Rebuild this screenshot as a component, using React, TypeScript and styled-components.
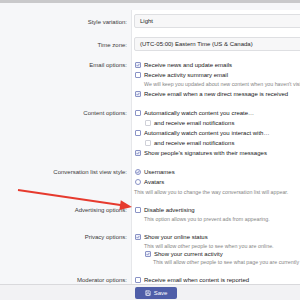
import React from "react";
import styled, { createGlobalStyle } from "styled-components";

const Global = createGlobalStyle`
  html, body { margin: 0; padding: 0; background: #ffffff; }
  body { font-family: "Liberation Sans", Arial, sans-serif; }
  * { box-sizing: border-box; }
`;

const Page = styled.div`
  position: relative;
  width: 300px;
  height: 300px;
  overflow: hidden;
  display: flex;
  flex-direction: column;
  background: #f6f7f9;
`;

const TopEdge = styled.div`
  height: 3px;
  flex: none;
  background: #c9c9cb;
`;

const Rows = styled.div`
  flex: 1;
  min-height: 0;
  overflow: hidden;
  padding-top: 7px;
`;

const Row = styled.div`
  display: grid;
  grid-template-columns: 132px 1fr;
`;

const Label = styled.div<{ $align?: "input" | "line" }>`
  padding: ${(p) => (p.$align === "input" ? "9px" : "4px")} 4px 0 0;
  text-align: right;
  font-size: 6px;
  line-height: ${(p) => (p.$align === "input" ? "6px" : "10px")};
  color: #3a3a3a;
  white-space: nowrap;
  border-right: 1px solid #e6e7ea;
`;

const Cell = styled.div`
  background: #ffffff;
  padding: 4px 0 5px 2px;
  min-width: 0;
`;

const Input = styled.div`
  height: 14px;
  width: 180px;
  border: 1px solid #dedfe2;
  border-radius: 2px;
  background: #f7f7f8;
  padding-left: 5px;
  display: flex;
  align-items: center;
  font-size: 6px;
  color: #1e1e1e;
  white-space: nowrap;
`;

const Option = styled.div<{ $sub?: boolean }>`
  display: flex;
  align-items: center;
  height: 10px;
  padding-left: ${(p) => (p.$sub ? "11px" : "1px")};
  font-size: 6px;
  color: #161616;
  white-space: nowrap;
`;

const Box = styled.span<{ $checked?: boolean; $muted?: boolean; $round?: boolean }>`
  flex: none;
  width: 6px;
  height: 6px;
  margin-right: 3px;
  border: 1px solid ${(p) => (p.$muted ? "#cfd0d8" : "#8a93c6")};
  border-radius: ${(p) => (p.$round ? "50%" : "1px")};
  background: ${(p) => (p.$checked ? "#eef0fa" : "#ffffff")};
  display: flex;
  align-items: center;
  justify-content: center;
`;

const Hint = styled.div<{ $indent?: number; $gap?: number; $top?: number }>`
  font-size: 5.3px;
  line-height: 8px;
  height: 8px;
  color: #858585;
  white-space: nowrap;
  padding-left: ${(p) => p.$indent ?? 10}px;
  margin-top: ${(p) => p.$top ?? 0}px;
  margin-bottom: ${(p) => p.$gap ?? 0}px;
`;

const Explain = styled.div`
  font-size: 5.3px;
  line-height: 8px;
  color: #858585;
  white-space: nowrap;
  margin-top: 1px;
`;

const Footer = styled.div`
  flex: none;
  height: 16px;
  border-top: 1px solid #d9d9dc;
  background: #f2f2f4;
  display: grid;
  grid-template-columns: 135px auto;
  align-items: start;
  padding-top: 2px;
`;

const SaveButton = styled.div`
  grid-column: 2;
  width: 42px;
  height: 12px;
  background: #4f5ea8;
  border-radius: 2px;
  display: flex;
  align-items: center;
  justify-content: center;
  gap: 3px;
  color: #ffffff;
  font-size: 6px;
`;

const ArrowLayer = styled.svg`
  position: absolute;
  left: 0;
  top: 0;
  pointer-events: none;
`;

const Check = () => (
  <svg width="4" height="4" viewBox="0 0 8 8">
    <path d="M1.2 4.2 L3.2 6.2 L6.8 1.8" fill="none" stroke="#5d69b3" strokeWidth="1.4" />
  </svg>
);

const CB = ({ checked, muted, round, sub, children }: { checked?: boolean; muted?: boolean; round?: boolean; sub?: boolean; children: React.ReactNode }) => (
  <Option $sub={sub}>
    <Box $checked={checked} $muted={muted} $round={round}>{checked && <Check />}</Box>
    {children}
  </Option>
);

export default function App() {
  return (
    <>
      <Global />
      <Page>
        <TopEdge />
        <Rows>
          <Row>
            <Label $align="input">Style variation:</Label>
            <Cell><Input>Light</Input></Cell>
          </Row>
          <Row>
            <Label $align="input">Time zone:</Label>
            <Cell><Input>(UTC-05:00) Eastern Time (US &amp; Canada)</Input></Cell>
          </Row>
          <Row>
            <Label>Email options:</Label>
            <Cell>
              <CB checked>Receive news and update emails</CB>
              <CB>Receive activity summary email</CB>
              <Hint $gap={1}>We will keep you updated about new content when you haven't visited for a while.</Hint>
              <CB checked>Receive email when a new direct message is received</CB>
            </Cell>
          </Row>
          <Row>
            <Label>Content options:</Label>
            <Cell>
              <CB>Automatically watch content you create…</CB>
              <CB sub muted>and receive email notifications</CB>
              <CB>Automatically watch content you interact with…</CB>
              <CB sub muted>and receive email notifications</CB>
              <CB checked>Show people's signatures with their messages</CB>
            </Cell>
          </Row>
          <Row>
            <Label>Conversation list view style:</Label>
            <Cell>
              <CB checked round>Usernames</CB>
              <CB round>Avatars</CB>
              <Explain>This will allow you to change the way conversation list will appear.</Explain>
            </Cell>
          </Row>
          <Row>
            <Label>Advertising options:</Label>
            <Cell>
              <CB>Disable advertising</CB>
              <Hint>This option allows you to prevent ads from appearing.</Hint>
            </Cell>
          </Row>
          <Row>
            <Label>Privacy options:</Label>
            <Cell>
              <CB checked>Show your online status</CB>
              <Hint $top={-0.5} $gap={-1}>This will allow other people to see when you are online.</Hint>
              <CB checked sub>Show your current activity</CB>
              <Hint $indent={19} $top={-1}>This will allow other people to see what page you are currently viewing.</Hint>
            </Cell>
          </Row>
          <Row>
            <Label>Moderator options:</Label>
            <Cell>
              <CB>Receive email when content is reported</CB>
            </Cell>
          </Row>
        </Rows>
        <Footer>
          <SaveButton>
            <svg width="6" height="6" viewBox="0 0 12 12">
              <path d="M1.5 1.5 H9 L10.5 3 V10.5 H1.5 Z" fill="none" stroke="#fff" strokeWidth="1.2" />
              <path d="M3.5 1.5 V4.5 H8 V1.5" fill="none" stroke="#fff" strokeWidth="1.1" />
              <rect x="3.5" y="7" width="5" height="3.5" fill="none" stroke="#fff" strokeWidth="1" />
            </svg>
            Save
          </SaveButton>
        </Footer>
        <ArrowLayer width="300" height="300" viewBox="0 0 300 300">
          <line x1="18" y1="190" x2="122" y2="205.3" stroke="#e63a2e" strokeWidth="2" />
          <polygon points="132,207 120.8,200.3 119.4,210.1" fill="#e63a2e" />
        </ArrowLayer>
      </Page>
    </>
  );
}
